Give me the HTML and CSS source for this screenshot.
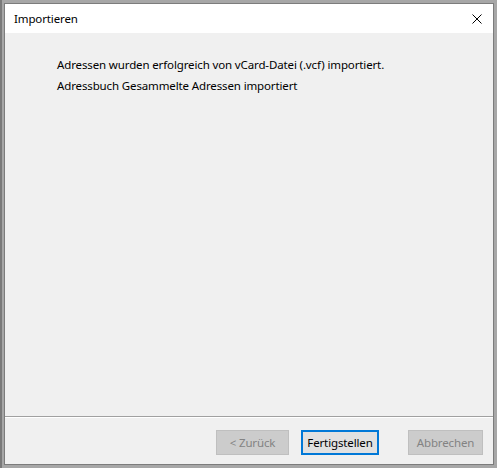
FILE: index.html
```html
<!DOCTYPE html>
<html lang="de">
<head>
<meta charset="utf-8">
<title>Importieren</title>
<link rel="stylesheet" href="styles.css">
</head>
<body>
<div class="backdrop">
  <div class="window">
    <div class="titlebar">
      <span class="title">Importieren</span>
      <span class="close" aria-label="Schließen">
        <svg width="10" height="10" viewBox="0 0 10 10"><path d="M0.5 0.5 L9.5 9.5 M9.5 0.5 L0.5 9.5" stroke="#000" stroke-width="1" fill="none"/></svg>
      </span>
    </div>
    <div class="content">
      <p class="msg">Adressen wurden erfolgreich von vCard-Datei (.vcf) importiert.</p>
      <p class="msg">Adressbuch Gesammelte Adressen importiert</p>
    </div>
    <div class="separator"></div>
    <div class="footer">
      <button class="btn disabled">&lt; Zurück</button>
      <button class="btn primary">Fertigstellen</button>
      <button class="btn disabled cancel">Abbrechen</button>
    </div>
  </div>
</div>
</body>
</html>
```
FILE: styles.css
```css
* { box-sizing: border-box; }
html, body { margin: 0; padding: 0; }
body {
  width: 497px;
  height: 468px;
  background: #a7a7a7;
  font-family: "Noto Sans", "Open Sans", sans-serif;
  font-size: 11.5px;
  letter-spacing: -0.13px;
  color: #000;
  overflow: hidden;
}
.backdrop {
  width: 497px;
  height: 468px;
  padding: 3px 3px 3px 4px;
  border-left: 2px solid #7a7a7a;
}
.window {
  width: 490px;
  height: 462px;
  border: 1px solid #7c7c7c;
  background: #f0f0f0;
  display: flex;
  flex-direction: column;
  margin-left: -2px;
}
.titlebar {
  height: 29px;
  background: #ffffff;
  display: flex;
  align-items: center;
  justify-content: space-between;
  padding: 0 11px 0 9px;
  flex: none;
}
.close { display: flex; align-items: center; }
.content {
  flex: 1;
  padding: 24px 0 0 52px;
}
.msg {
  margin: 0 0 5px 0;
  line-height: 16px;
}
.separator {
  height: 2px;
  border-top: 1px solid #a0a0a0;
  border-bottom: 1px solid #ffffff;
  flex: none;
}
.footer {
  height: 46px;
  flex: none;
  display: flex;
  align-items: flex-start;
  padding: 12px 10px 0 0;
  justify-content: flex-end;
}
.btn {
  font-family: inherit;
  font-size: 11.5px;
  letter-spacing: -0.13px;
  height: 25px;
  padding: 0;
  margin: 0;
  border: 1px solid #adadad;
  background: #e1e1e1;
  color: #000;
}
.btn.disabled {
  background: #cccccc;
  border-color: #bfbfbf;
  color: #838383;
  width: 73px;
}
.btn.primary {
  width: 78px;
  margin-left: 12px;
  border: 2px solid #0078d7;
}
.btn.cancel {
  width: 75px;
  margin-left: 29px;
}
```
